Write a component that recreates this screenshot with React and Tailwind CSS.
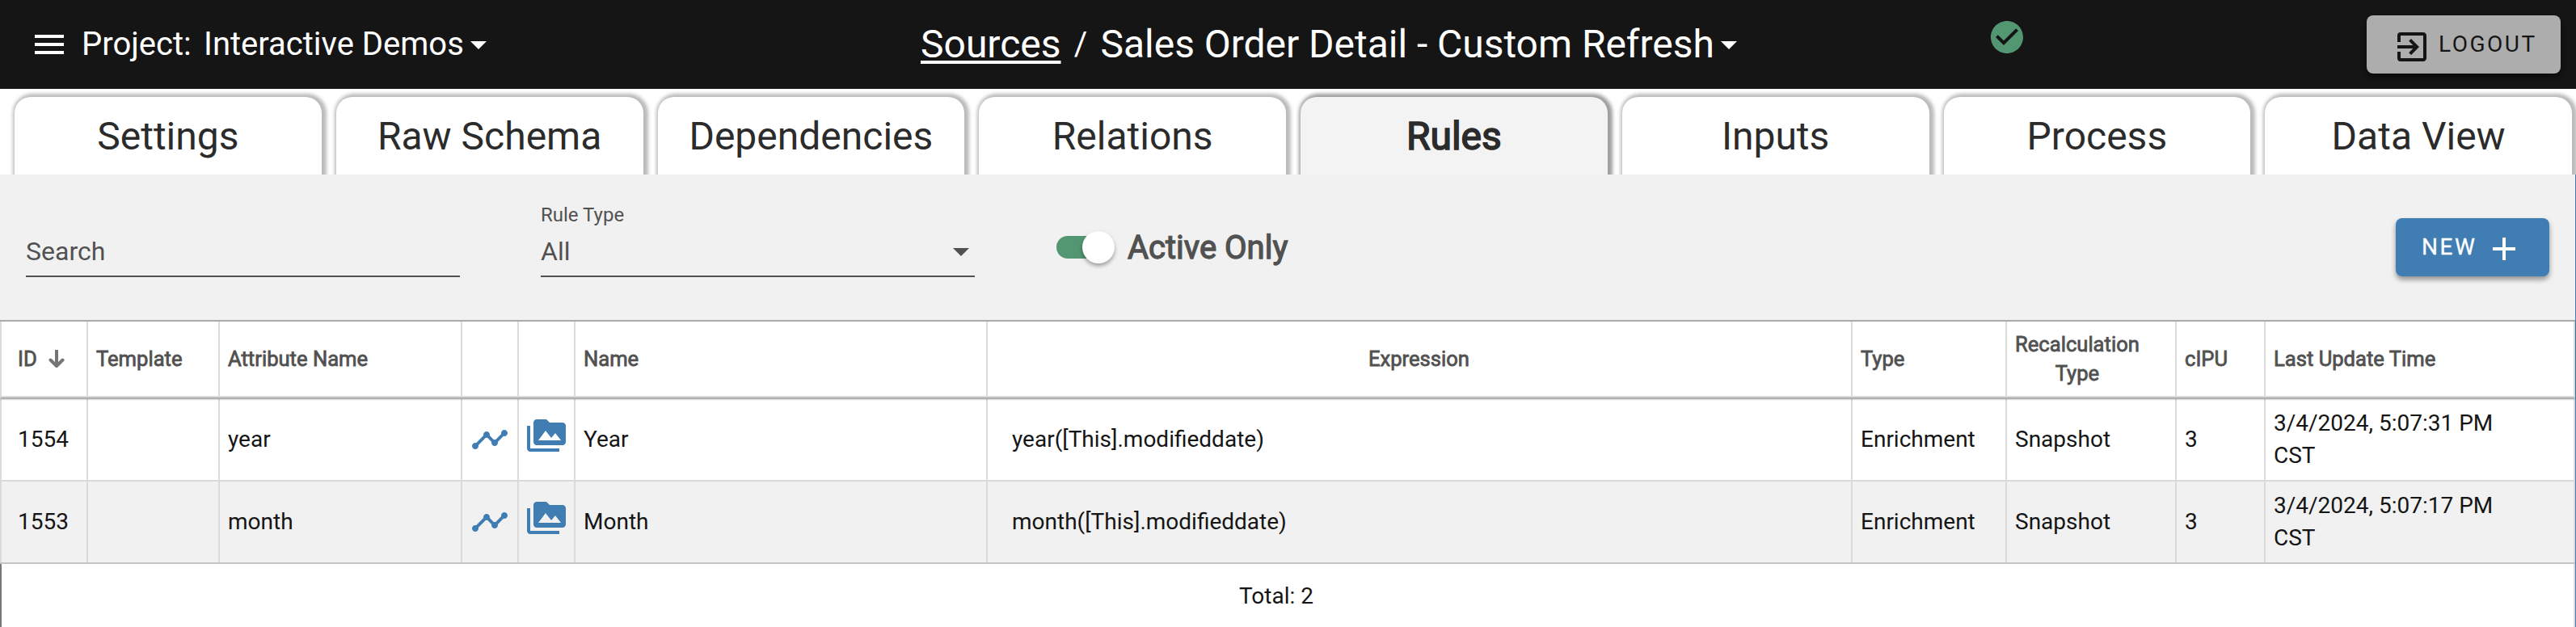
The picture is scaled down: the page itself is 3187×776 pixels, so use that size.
import React from "react";
import { MdMenu, MdArrowDropDown, MdCheckCircle, MdExitToApp, MdAdd, MdTimeline, MdPermMedia } from "react-icons/md";

const tabs = ["Settings", "Raw Schema", "Dependencies", "Relations", "Rules", "Inputs", "Process", "Data View"];

const rows = [
  { id: "1554", attribute: "year", name: "Year", expression: "year([This].modifieddate)", time: "3/4/2024, 5:07:31 PM" },
  { id: "1553", attribute: "month", name: "Month", expression: "month([This].modifieddate)", time: "3/4/2024, 5:07:17 PM" },
];

const GRID = "grid grid-cols-[107px_163px_300px_70px_70px_510px_1070px_191px_210px_110px_1fr]";
const CELL = "flex items-center border-l-2 border-[#dadada] pl-[10px]";

function SortArrow() {
  return (
    <svg viewBox="0 0 20 24" className="ml-[14px] h-6 w-5" fill="none" stroke="#757575" strokeWidth="4">
      <path d="M10 1v20" />
      <path d="M2.5 13.5 10 21l7.5-7.5" strokeLinecap="round" strokeLinejoin="round" />
    </svg>
  );
}

function Header() {
  return (
    <header className="flex h-[110px] items-center bg-[#151515] text-white">
      <MdMenu className="ml-[37px] size-12" />
      <div className="ml-[16px] flex w-[1038px] items-center text-[40px] leading-[48px]">
        <span className="w-[151px]">Project:</span>
        <span>Interactive Demos</span>
        <MdArrowDropDown className="-ml-[6px] size-12" />
      </div>
      <div className="flex w-[1320px] items-center text-[48px] leading-[56px]">
        <span className="underline decoration-4 underline-offset-[4px]">Sources</span>
        <span className="w-[49px] text-center text-[40px]">/</span>
        <span className="tracking-[-0.03px]">Sales Order Detail - Custom Refresh</span>
        <MdArrowDropDown className="-ml-[6px] size-12" />
      </div>
      <MdCheckCircle className="mb-[18px] size-12 text-[#529672]" />
      <button className="ml-auto mr-[19px] flex h-[72px] w-[240px] items-center rounded-lg bg-[#adadad] pl-8 text-[28px] tracking-[2.5px] text-[#151515] shadow-[0_4px_8px_rgba(0,0,0,0.5)]">
        <MdExitToApp className="mr-[9px] mt-[6px] size-12" />
        LOGOUT
      </button>
    </header>
  );
}

function Tabs() {
  return (
    <nav className="flex h-[106px] gap-[18px] overflow-hidden bg-white pl-[18px] pr-[5px] pt-[10px]">
      {tabs.map((t) => (
        <div
          key={t}
          className={
            "flex flex-1 items-center justify-center rounded-t-[20px] pt-[2px] text-[48px] text-[#2b2b2b] " +
            (t === "Rules"
              ? "bg-[#f3f3f3] shadow-[2px_0_4px_4px_rgba(0,0,0,0.38)] [-webkit-text-stroke:1.6px_#2b2b2b]"
              : "bg-white shadow-[2px_0_4px_4px_rgba(0,0,0,0.27)]")
          }
        >
          {t}
        </div>
      ))}
    </nav>
  );
}

function Filters() {
  return (
    <section className="flex h-[180px] bg-[#f1f1f1] text-[#515151]">
      <div className="ml-8 mt-[75px] h-[52px] w-[537px] border-b-2 border-[#515151] text-[32px] leading-[40px]">Search</div>
      <div className="ml-[100px] mt-[35px] h-[92px] w-[537px] border-b-2 border-[#515151]">
        <div className="h-10 text-[24px] leading-[30px]">Rule Type</div>
        <div className="flex items-center justify-between text-[32px] leading-[40px]">
          All
          <MdArrowDropDown className="-my-1 -mr-[7px] size-12" />
        </div>
      </div>
      <div className="ml-[101px] mt-[70px] flex h-10 items-center">
        <div className="flex h-7 w-[68px] items-center justify-end rounded-full bg-[#529672]">
          <div className="-mr-[4px] size-10 shrink-0 rounded-full bg-white shadow-[0_3px_5px_rgba(0,0,0,0.35)]" />
        </div>
        <span className="ml-5 pt-[2px] text-[40px] [-webkit-text-stroke:1.3px_#515151]">Active Only</span>
      </div>
      <button className="ml-auto mr-8 mt-[54px] flex h-[72px] w-[190px] items-center rounded-lg bg-[#3f7db3] pl-8 text-[28px] tracking-[2.5px] text-white shadow-[0_4px_6px_rgba(0,0,0,0.4)] [-webkit-text-stroke:0.3px_white]">
        NEW
        <MdAdd className="ml-[10px] mt-[4px] size-12" />
      </button>
    </section>
  );
}

function Table() {
  return (
    <section className="text-[28px] leading-[40px] text-[#151515]">
      <div className={GRID + " relative mb-[2px] h-[96px] border-b-2 border-t-2 border-b-[#dadada] border-t-[#ababab] bg-white text-[25.6px] leading-[36px] text-[#515151] shadow-[0_2px_2px_rgba(0,0,0,0.4)] [-webkit-text-stroke:0.8px_#515151]"}>
        <div className="flex items-center border-l-2 border-[#dadada] pl-5">
          ID
          <SortArrow />
        </div>
        <div className={CELL}>Template</div>
        <div className={CELL}>Attribute Name</div>
        <div className={CELL} />
        <div className={CELL} />
        <div className={CELL}>Name</div>
        <div className={CELL + " justify-center pr-[11px]"}>Expression</div>
        <div className={CELL}>Type</div>
        <div className={CELL}>
          <span className="text-center">Recalculation<br />Type</span>
        </div>
        <div className={CELL}>cIPU</div>
        <div className={CELL + " border-r-2"}>Last Update Time</div>
      </div>
      {rows.map((r, i) => (
        <div key={r.id} className={GRID + " border-b-2 " + (i % 2 ? "h-[102px] border-[#c4c4c4] bg-[#f1f1f1]" : "-mt-[2px] h-[104px] border-[#dadada] bg-white pt-[2px]")}>
          <div className="flex items-center border-l-2 border-[#dadada] pl-5">{r.id}</div>
          <div className={CELL} />
          <div className={CELL}>{r.attribute}</div>
          <div className={CELL}>
            <MdTimeline className="size-12 shrink-0 text-[#3f7db3]" />
          </div>
          <div className={CELL}>
            <MdPermMedia className="mb-[10px] size-12 shrink-0 text-[#3f7db3]" />
          </div>
          <div className={CELL}>{r.name}</div>
          <div className={CELL + " pl-[30px]"}>{r.expression}</div>
          <div className={CELL}>Enrichment</div>
          <div className={CELL}>Snapshot</div>
          <div className={CELL}>3</div>
          <div className={CELL + " border-r-2"}>
            <span>{r.time}<br />CST</span>
          </div>
        </div>
      ))}
      <div className="flex h-[78px] items-center border-l-2 border-r-2 border-l-[#777] border-r-[#dadada] pl-[1531px] pt-[2px]">Total: 2</div>
    </section>
  );
}

export default function App() {
  return (
    <div className="h-[776px] w-[3187px] overflow-hidden bg-white font-['Roboto',sans-serif]">
      <Header />
      <Tabs />
      <main className="border-r border-[#3f7db3]">
        <Filters />
        <Table />
      </main>
    </div>
  );
}
